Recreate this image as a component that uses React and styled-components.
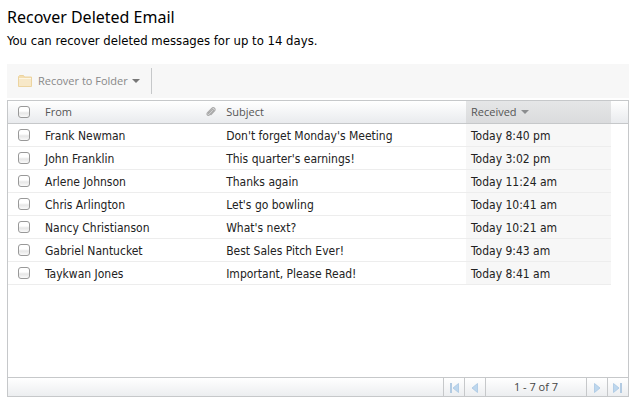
import React, { useState } from 'react';
import styled, { createGlobalStyle } from 'styled-components';

const GlobalStyle = createGlobalStyle`
  *, *::before, *::after { box-sizing: border-box; }
  body {
    margin: 0;
    background: #fff;
    color: #222;
    font: 12px/16px "DejaVu Sans Condensed", "Noto Sans", sans-serif;
  }
`;

const Page = styled.main`
  display: flex;
  flex-direction: column;
  min-height: 100vh;
  padding: 6px 9px 8px 7px;
`;

const Title = styled.h1`
  margin: 0;
  color: #000;
  font: 400 16px/22px "Noto Sans", sans-serif;
`;

const Intro = styled.p`
  margin: 5px 0 15px;
  color: #000;
  font-size: 13px;
`;

const Toolbar = styled.div`
  display: flex;
  align-items: center;
  height: 34px;
  margin-bottom: 2px;
  background: #f7f7f7;
`;

const ToolButton = styled.button`
  display: flex;
  align-items: center;
  height: 26px;
  padding: 0 11px;
  border: 0;
  border-right: 1px solid #c6c8ca;
  background: none;
  color: #888;
  font: 11px/16px "Open Sans", "Noto Sans", sans-serif;
`;

const ButtonText = styled.span`
  margin: 0 4px 0 6px;
`;

const Grid = styled.section`
  display: flex;
  flex: 1;
  flex-direction: column;
  border: 1px solid #c6c8ca;
`;

const Table = styled.table`
  width: 100%;
  table-layout: fixed;
  border-collapse: separate;
  border-spacing: 0;
`;

const Col = styled.col`
  width: ${(p) => p.$width};
`;

const HeadRow = styled.tr`
  background: linear-gradient(#fff, #e8eaed);
`;

const HeadCell = styled.th`
  height: 23px;
  padding: 0 5px;
  border-bottom: 1px solid #c6c8ca;
  background: ${(p) => (p.$sorted ? 'linear-gradient(#e5e6e7, #dadbdd)' : 'none')};
  color: #555;
  font: 400 11px/16px "Open Sans", "Noto Sans", sans-serif;
  text-align: left;
  vertical-align: middle;
`;

const SortButton = styled.button`
  display: flex;
  align-items: center;
  gap: 4px;
  padding: 0;
  border: 0;
  background: none;
  color: inherit;
  font: inherit;
`;

const Cell = styled.td`
  height: 23px;
  padding: ${(p) => (p.$control ? '0 5px' : '2px 5px 0')};
  overflow: hidden;
  border-bottom: 1px solid #ededed;
  background: ${(p) => (p.$sorted ? '#f7f7f7' : '#fff')};
  white-space: nowrap;
  text-overflow: ellipsis;
  vertical-align: middle;
`;

const Check = styled.input`
  display: block;
  width: 12px;
  height: 12px;
  margin: 0 0 0 5px;
  appearance: none;
  border: 1px solid #999;
  border-radius: 3px;
  background: linear-gradient(#fff 40%, #e6e6e6 60%, #fafafa);
  &:checked { background: #7ba5d0; }
`;

const Footer = styled.nav`
  display: flex;
  height: 19px;
  margin-top: auto;
  justify-content: flex-end;
  border-top: 1px solid #c6c8ca;
  background: linear-gradient(#fff, #eceef0);
`;

const PageButton = styled.button`
  display: flex;
  align-items: center;
  justify-content: center;
  width: 21px;
  padding: 2px 0 0;
  border: 0;
  border-left: 1px solid #c6c8ca;
  background: none;
`;

const PageCount = styled.span`
  width: 101px;
  border-left: 1px solid #c6c8ca;
  color: #444;
  font: 11px/18px "Open Sans", "Noto Sans", sans-serif;
  text-align: center;
`;

const Folder = () => (
  <svg width="14" height="12" viewBox="0 0 14 12" aria-hidden="true">
    <path d="M.5 2V1.500l1-1h4l1 1.500h7v9.500H.5z" fill="#f4deb0" stroke="#ecd4a0" />
    <path d="M1 4h12v7H1z" fill="#f7e8c8" />
    <path d="M1 3.500h12" stroke="#fdf6e4" />
  </svg>
);

const Caret = ({ color }) => (
  <svg width="8" height="4" viewBox="0 0 8 4" aria-hidden="true">
    <path d="M0 0h8L4 4z" fill={color} />
  </svg>
);

const Clip = () => (
  <svg width="10" height="10" viewBox="0 0 10 10" role="img" aria-label="Attachment" display="block">
    <path
      d="M2.500 6.500 6 2.800c.9-.9 2 .1 1.200 1L3.700 7.700c-1.400 1.500-3.600-.2-2.300-1.800L5.700 1.400c1.900-1.900 4.600.5 2.800 2.500L5 7.700"
      fill="none"
      stroke="#aaa"
      strokeWidth="1.200"
      strokeLinecap="round"
    />
  </svg>
);

const Arrow = ({ back, end }) => (
  <svg width="10" height="10" viewBox="0 0 10 10" aria-hidden="true">
    <g transform={back ? 'translate(10 0) scale(-1 1)' : undefined}>
      <path d={end ? 'M.5.500v9L6 5z' : 'M2.500.500v9L8 5z'} fill="#bdd7ee" stroke="#a9c6e2" strokeWidth=".8" />
      {end && <path d="M7 0h2v10H7z" fill="#b3cbe2" />}
    </g>
  </svg>
);

const messages = [
  ['Frank Newman', "Don't forget Monday's Meeting", 'Today 8:40 pm'],
  ['John Franklin', "This quarter's earnings!", 'Today 3:02 pm'],
  ['Arlene Johnson', 'Thanks again', 'Today 11:24 am'],
  ['Chris Arlington', "Let's go bowling", 'Today 10:41 am'],
  ['Nancy Christianson', "What's next?", 'Today 10:21 am'],
  ['Gabriel Nantucket', 'Best Sales Pitch Ever!', 'Today 9:43 am'],
  ['Taykwan Jones', 'Important, Please Read!', 'Today 8:41 am'],
];

export default function App() {
  const [selected, setSelected] = useState([]);
  const toggle = (i) =>
    setSelected((s) => (s.includes(i) ? s.filter((n) => n !== i) : [...s, i]));
  const all = selected.length === messages.length;

  return (
    <>
      <GlobalStyle />
      <Page>
        <Title>Recover Deleted Email</Title>
        <Intro>You can recover deleted messages for up to 14 days.</Intro>
        <Toolbar>
          <ToolButton type="button" disabled={selected.length === 0}>
            <Folder />
            <ButtonText>Recover to Folder</ButtonText>
            <Caret color="#777" />
          </ToolButton>
        </Toolbar>
        <Grid>
          <Table>
            <colgroup>
              <Col $width="32px" />
              <Col $width="26%" />
              <Col $width="20px" />
              <Col $width="auto" />
              <Col $width="145px" />
              <Col $width="17px" />
            </colgroup>
            <thead>
              <HeadRow>
                <HeadCell>
                  <Check
                    type="checkbox"
                    aria-label="Select all"
                    checked={all}
                    onChange={() => setSelected(all ? [] : messages.map((_, i) => i))}
                  />
                </HeadCell>
                <HeadCell>From</HeadCell>
                <HeadCell><Clip /></HeadCell>
                <HeadCell>Subject</HeadCell>
                <HeadCell $sorted aria-sort="descending">
                  <SortButton type="button">Received<Caret color="#8b8d8f" /></SortButton>
                </HeadCell>
                <HeadCell />
              </HeadRow>
            </thead>
            <tbody>
              {messages.map(([from, subject, received], i) => (
                <tr key={from}>
                  <Cell $control>
                    <Check
                      type="checkbox"
                      aria-label={`Select ${from}`}
                      checked={selected.includes(i)}
                      onChange={() => toggle(i)}
                    />
                  </Cell>
                  <Cell>{from}</Cell>
                  <Cell />
                  <Cell>{subject}</Cell>
                  <Cell $sorted>{received}</Cell>
                </tr>
              ))}
            </tbody>
          </Table>
          <Footer aria-label="Pages">
            <PageButton type="button" aria-label="First page"><Arrow back end /></PageButton>
            <PageButton type="button" aria-label="Previous page"><Arrow back /></PageButton>
            <PageCount>1 - 7 of 7</PageCount>
            <PageButton type="button" aria-label="Next page"><Arrow /></PageButton>
            <PageButton type="button" aria-label="Last page"><Arrow end /></PageButton>
          </Footer>
        </Grid>
      </Page>
    </>
  );
}
